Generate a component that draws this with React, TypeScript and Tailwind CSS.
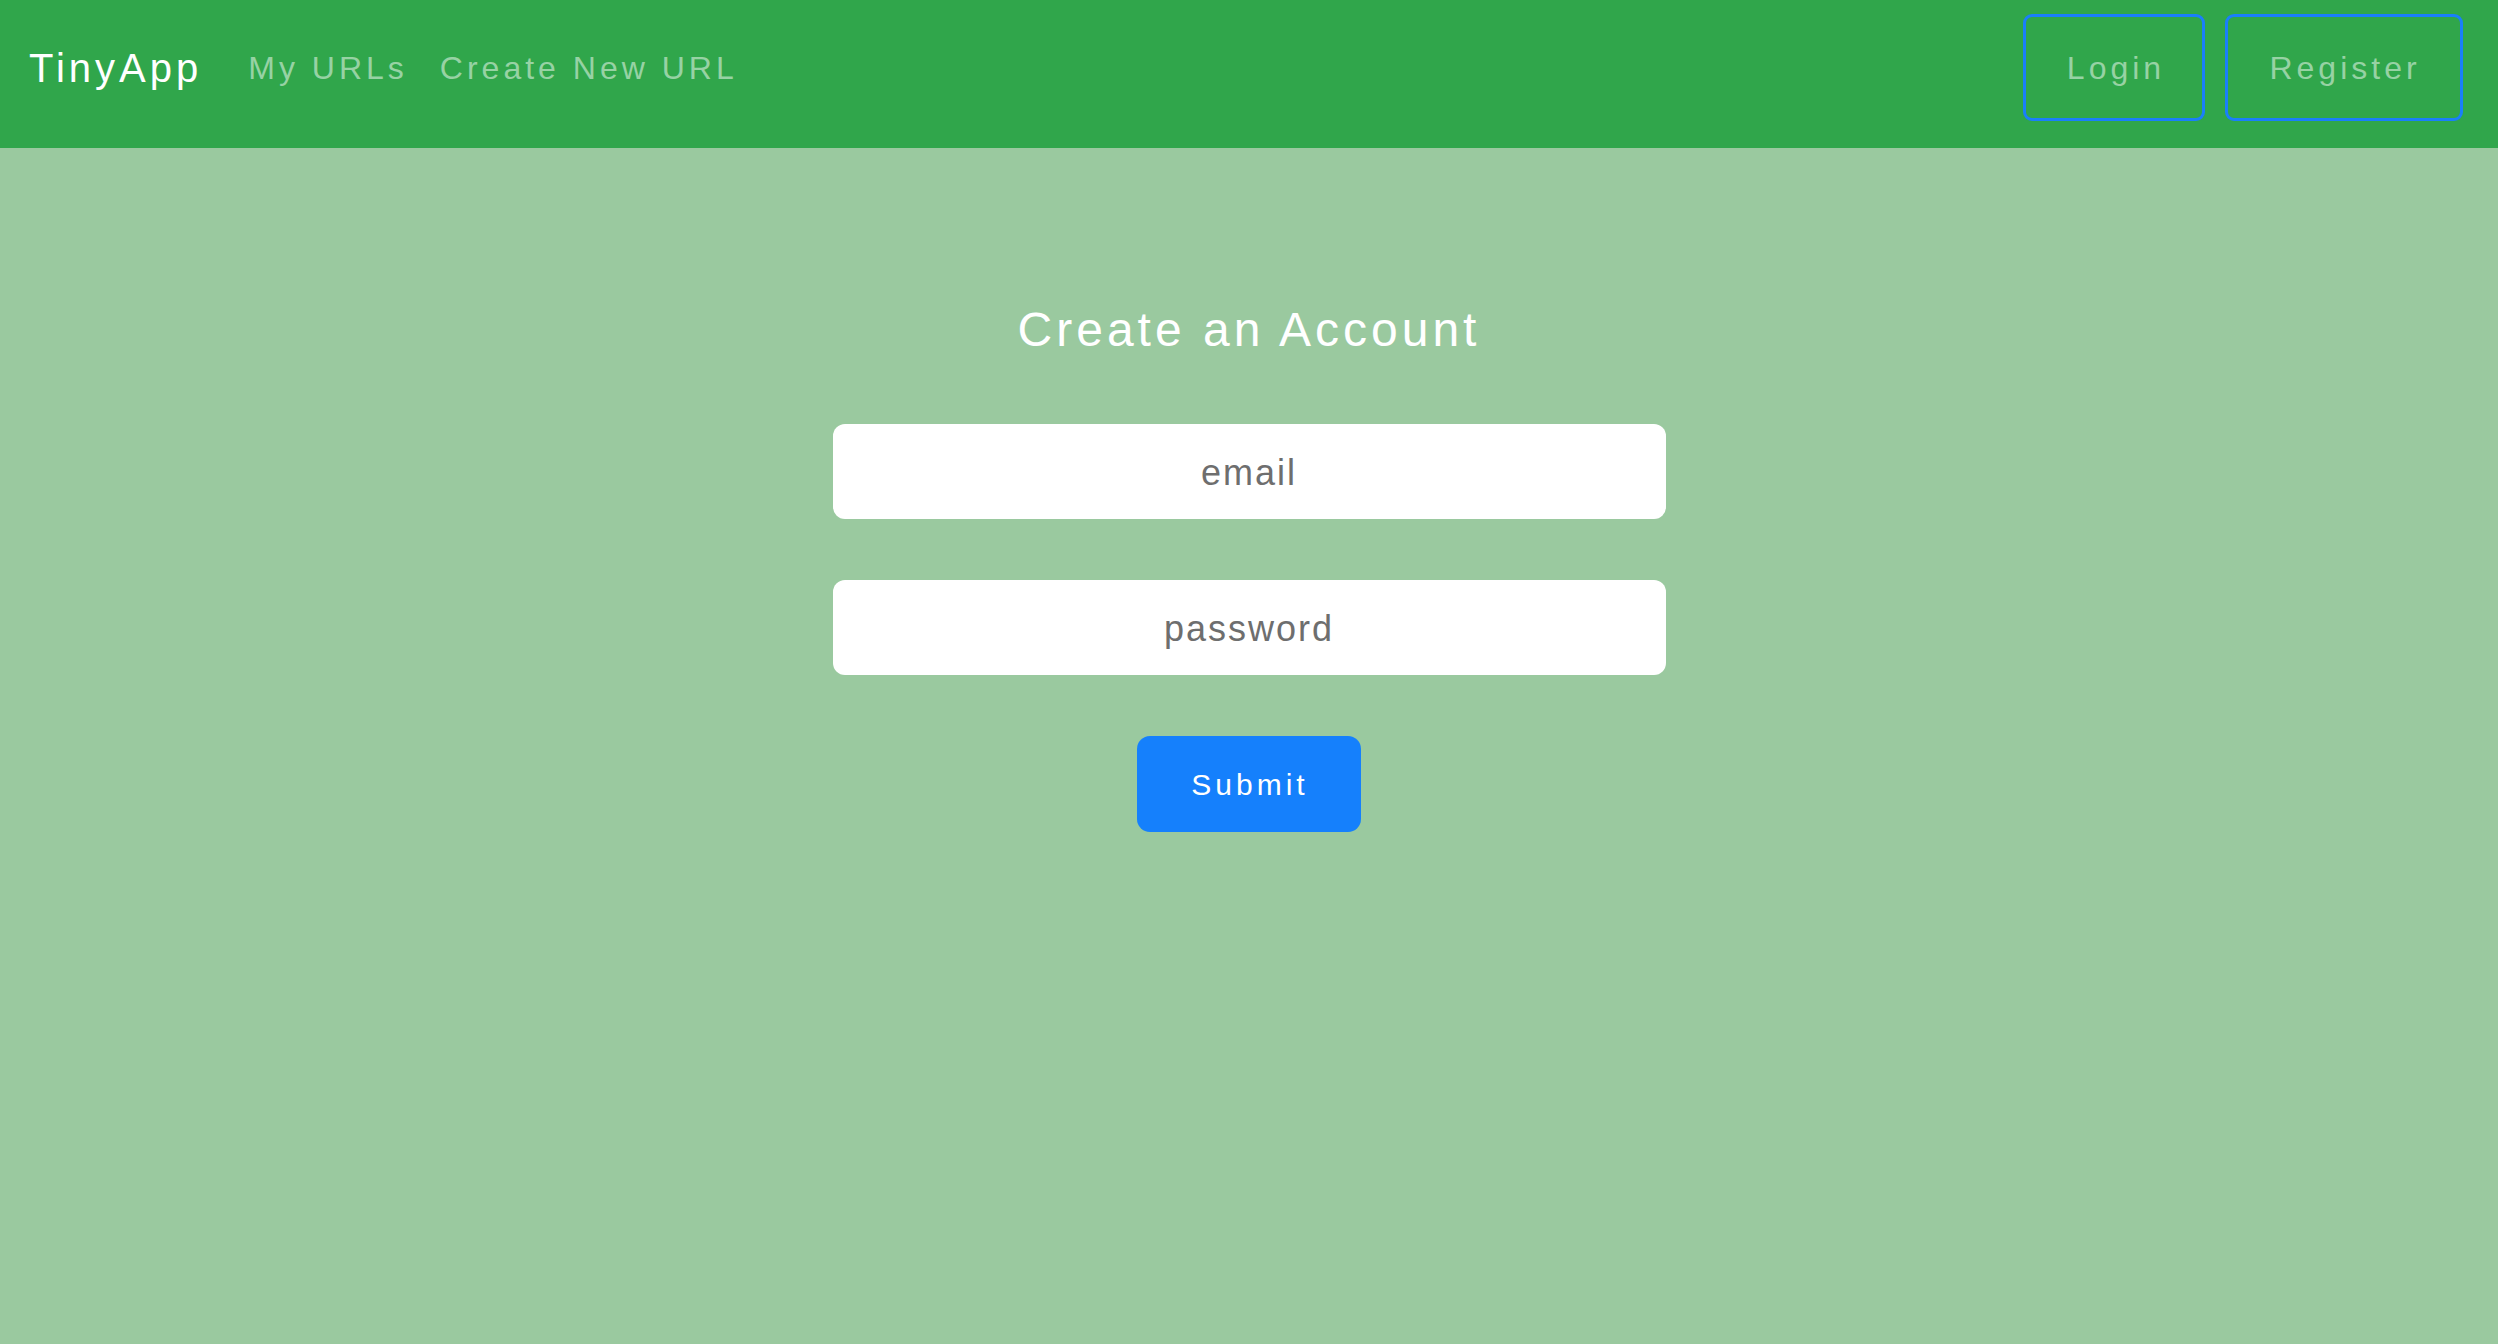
import React from 'react';

const font = { fontFamily: '"Liberation Sans", Arial, sans-serif' };

const NavLink: React.FC<{ label: string }> = ({ label }) => (
  <a href="#" className="text-[32px] tracking-[4px] text-[#97d2a4] leading-normal">
    {label}
  </a>
);

const App: React.FC = () => {
  return (
    <div className="min-h-screen w-full bg-[#9ac99f]" style={font}>
      <nav className="h-[148px] bg-[#30a64b] flex items-start pt-[14px] pl-[29px] pr-[35px]">
        <div className="h-[107px] flex items-center">
          <span className="text-[40px] tracking-[4px] text-white leading-normal">TinyApp</span>
        </div>
        <div className="h-[107px] flex items-center gap-[32px] ml-[46px]">
          <NavLink label="My URLs" />
          <NavLink label="Create New URL" />
        </div>
        <div className="ml-auto flex gap-[20px]">
          <button className="h-[107px] w-[182px] flex items-center justify-center rounded-[9px] border-[3px] border-[#1a7ffa] text-[32px] tracking-[4px] text-[#97d2a4] pl-[4px]">
            Login
          </button>
          <button className="h-[107px] w-[238px] flex items-center justify-center rounded-[9px] border-[3px] border-[#1a7ffa] text-[32px] tracking-[4px] text-[#97d2a4] pl-[2px]">
            Register
          </button>
        </div>
      </nav>

      <main className="flex flex-col items-center pt-[158px]">
        <h1 className="text-[48px] leading-[48px] tracking-[4px] text-white">Create an Account</h1>
        <form className="flex flex-col items-center mt-[70px]" onSubmit={(e) => e.preventDefault()}>
          <input
            type="email"
            placeholder="email"
            className="w-[833px] h-[95px] rounded-[12px] bg-white text-center text-[36px] tracking-[2px] text-[#333] placeholder:text-[#6e6e6e] outline-none pt-[2px]"
            style={font}
          />
          <input
            type="password"
            placeholder="password"
            className="w-[833px] h-[95px] mt-[61px] rounded-[12px] bg-white text-center text-[36px] tracking-[2px] text-[#333] placeholder:text-[#6e6e6e] outline-none pt-[2px]"
            style={font}
          />
          <button
            type="submit"
            className="mt-[61px] w-[224px] h-[96px] rounded-[13px] bg-[#1580fc] text-white text-[30px] tracking-[4px] pl-[2px]"
          >
            Submit
          </button>
        </form>
      </main>
    </div>
  );
};

export default App;
